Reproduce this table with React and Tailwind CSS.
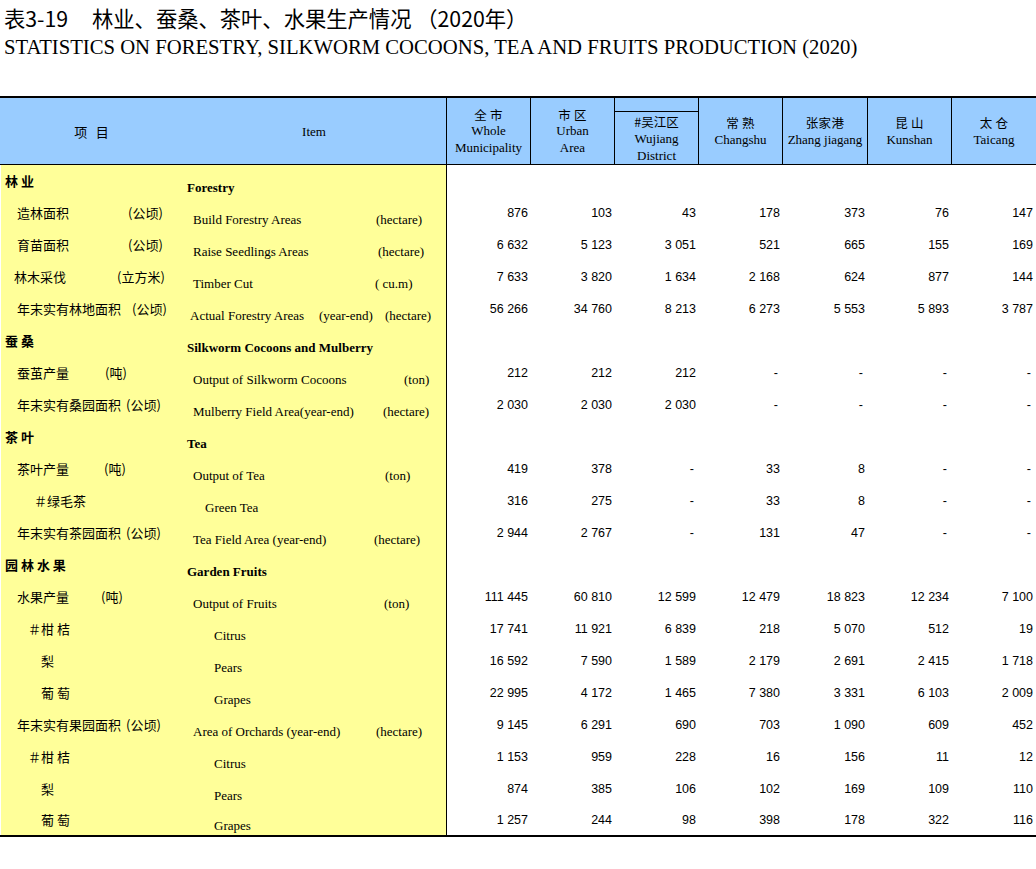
import React from "react";

const zh = { fontFamily: '"Noto Sans CJK SC", "Liberation Sans", sans-serif' };

const cols = [
  { zh: "全 市", en: ["Whole", "Municipality"] },
  { zh: "市 区", en: ["Urban", "Area"] },
  { zh: "#吴江区", en: ["Wujiang", "District"], sub: true },
  { zh: "常 熟", en: ["Changshu"] },
  { zh: "张家港", en: ["Zhang jiagang"] },
  { zh: "昆 山", en: ["Kunshan"] },
  { zh: "太 仓", en: ["Taicang"] },
];

const colW = ["w-[84px]", "w-[84px]", "w-[84px]", "w-[84px]", "w-[85px]", "w-[84px]", "w-[84px]"];

// zx/ex = left offsets, zw/ew = label widths (unit follows)
const rows = [
  { sec: true, z: "林 业", e: "Forestry" },
  { z: "造林面积", zx: "pl-[16px]", zw: "w-[111px]", zu: "(公顷)", e: "Build Forestry Areas", ex: "pl-[11px]", ew: "w-[183px]", eu: "(hectare)", n: ["876", "103", "43", "178", "373", "76", "147"] },
  { z: "育苗面积", zx: "pl-[16px]", zw: "w-[111px]", zu: "(公顷)", e: "Raise Seedlings Areas", ex: "pl-[11px]", ew: "w-[185px]", eu: "(hectare)", n: ["6 632", "5 123", "3 051", "521", "665", "155", "169"] },
  { z: "林木采伐", zx: "pl-[13px]", zw: "w-[103px]", zu: "(立方米)", e: "Timber Cut", ex: "pl-[11px]", ew: "w-[182px]", eu: "( cu.m)", n: ["7 633", "3 820", "1 634", "2 168", "624", "877", "144"] },
  { z: "年末实有林地面积", zx: "pl-[16px]", zw: "w-[115px]", zu: "(公顷)", e: "Actual Forestry Areas", ex: "pl-[8px]", ew: "w-[129px]", em: "(year-end)", eu: "(hectare)", n: ["56 266", "34 760", "8 213", "6 273", "5 553", "5 893", "3 787"] },
  { sec: true, z: "蚕 桑", e: "Silkworm Cocoons and Mulberry" },
  { z: "蚕茧产量", zx: "pl-[16px]", zw: "w-[88px]", zu: "(吨)", e: "Output of Silkworm Cocoons", ex: "pl-[11px]", ew: "w-[211px]", eu: "(ton)", n: ["212", "212", "212", "-", "-", "-", "-"] },
  { z: "年末实有桑园面积", zx: "pl-[16px]", zw: "w-[109px]", zu: "(公顷)", e: "Mulberry Field Area(year-end)", ex: "pl-[11px]", ew: "w-[190px]", eu: "(hectare)", n: ["2 030", "2 030", "2 030", "-", "-", "-", "-"] },
  { sec: true, z: "茶 叶", e: "Tea" },
  { z: "茶叶产量", zx: "pl-[16px]", zw: "w-[87px]", zu: "(吨)", e: "Output of Tea", ex: "pl-[11px]", ew: "w-[192px]", eu: "(ton)", n: ["419", "378", "-", "33", "8", "-", "-"] },
  { z: "＃绿毛茶", zx: "pl-[33px]", e: "Green Tea", ex: "pl-[23px]", n: ["316", "275", "-", "33", "8", "-", "-"] },
  { z: "年末实有茶园面积", zx: "pl-[16px]", zw: "w-[109px]", zu: "(公顷)", e: "Tea Field Area (year-end)", ex: "pl-[11px]", ew: "w-[181px]", eu: "(hectare)", n: ["2 944", "2 767", "-", "131", "47", "-", "-"] },
  { sec: true, z: "园 林 水 果", e: "Garden Fruits" },
  { z: "水果产量", zx: "pl-[16px]", zw: "w-[84px]", zu: "(吨)", e: "Output of Fruits", ex: "pl-[11px]", ew: "w-[191px]", eu: "(ton)", n: ["111 445", "60 810", "12 599", "12 479", "18 823", "12 234", "7 100"] },
  { z: "＃柑 桔", zx: "pl-[27px]", e: "Citrus", ex: "pl-[32px]", n: ["17 741", "11 921", "6 839", "218", "5 070", "512", "19"] },
  { z: "梨", zx: "pl-[40px]", e: "Pears", ex: "pl-[32px]", n: ["16 592", "7 590", "1 589", "2 179", "2 691", "2 415", "1 718"] },
  { z: "葡 萄", zx: "pl-[40px]", e: "Grapes", ex: "pl-[32px]", n: ["22 995", "4 172", "1 465", "7 380", "3 331", "6 103", "2 009"] },
  { z: "年末实有果园面积", zx: "pl-[16px]", zw: "w-[109px]", zu: "(公顷)", e: "Area of Orchards (year-end)", ex: "pl-[11px]", ew: "w-[183px]", eu: "(hectare)", n: ["9 145", "6 291", "690", "703", "1 090", "609", "452"] },
  { z: "＃柑 桔", zx: "pl-[27px]", e: "Citrus", ex: "pl-[32px]", n: ["1 153", "959", "228", "16", "156", "11", "12"] },
  { z: "梨", zx: "pl-[40px]", e: "Pears", ex: "pl-[32px]", n: ["874", "385", "106", "102", "169", "109", "110"] },
  { z: "葡 萄", zx: "pl-[40px]", e: "Grapes", ex: "pl-[32px]", n: ["1 257", "244", "98", "398", "178", "322", "116"] },
];

function HeaderCell({ col, w }) {
  if (col.sub) {
    return (
      <div className={`${w} flex flex-col border-r border-black`}>
        <div className="h-[15px] border-b border-black" />
        <div className="flex-1 flex flex-col items-center justify-center leading-[17px] pt-[1px]">
          <div style={zh} className="text-[12.5px]">{col.zh}</div>
          {col.en.map((t) => (
            <div key={t} className="text-[13px]">{t}</div>
          ))}
        </div>
      </div>
    );
  }
  return (
    <div className={`${w} flex flex-col items-center justify-center border-r border-black leading-[16.5px] pt-[1px] last:border-r-0`}>
      <div style={zh} className="text-[12.5px] tracking-wide">{col.zh}</div>
      {col.en.map((t) => (
        <div key={t} className="text-[13px] whitespace-nowrap">{t}</div>
      ))}
    </div>
  );
}

export default function App() {
  return (
    <div className="w-[1036px] h-[869px] bg-white text-black font-['Liberation_Serif',serif]">
      {/* Title */}
      <div className="pt-[4px] pl-[4px]">
        <h1 style={zh} className="text-[21.3px] font-normal leading-[28px] whitespace-pre">
          表3-19     林业、蚕桑、茶叶、水果生产情况 （2020年）
        </h1>
        <h2 className="text-[20.7px] leading-[28px] mt-[1px]">
          STATISTICS ON FORESTRY, SILKWORM COCOONS, TEA AND FRUITS PRODUCTION (2020)
        </h2>
      </div>

      {/* Table */}
      <div className="mt-[35px] border-t-2 border-b-2 border-black">
        {/* Header */}
        <div className="flex h-[67px] bg-[#99ccff] border-b border-black">
          <div className="w-[447px] flex border-r border-black pl-[1px]">
            <div style={zh} className="w-[181px] flex items-center justify-center text-[13px] whitespace-pre pt-[2px]">
              项   目
            </div>
            <div className="flex-1 flex items-center justify-center text-[13px] pt-[2px]">Item</div>
          </div>
          {cols.map((c, i) => (
            <HeaderCell key={c.zh} col={c} w={colW[i]} />
          ))}
        </div>

        {/* Body */}
        <div className="flex">
          <div className="w-[447px] bg-[#ffff99] border-r border-black ml-[1px]">
            {rows.map((r, i) => (
              <div key={i} className="h-[32px] flex last:h-[30px]">
                <div style={zh} className={`w-[181px] flex items-center text-[13px] whitespace-nowrap ${r.sec ? "font-bold pl-[4px]" : r.zx}`}>
                  {r.zu ? (
                    <>
                      <span className={r.zw}>{r.z}</span>
                      <span>{r.zu}</span>
                    </>
                  ) : (
                    <span className="whitespace-pre">{r.z}</span>
                  )}
                </div>
                <div className={`flex-1 flex items-end pb-[1px] leading-[16px] text-[13px] whitespace-nowrap ${r.sec ? "font-bold pl-[5px]" : r.ex}`}>
                  {r.eu ? (
                    <>
                      <span className={r.ew}>{r.e}</span>
                      {r.em && <span className="w-[66px]">{r.em}</span>}
                      <span>{r.eu}</span>
                    </>
                  ) : (
                    <span>{r.e}</span>
                  )}
                </div>
              </div>
            ))}
          </div>
          <div className="flex-1 font-['Liberation_Sans',sans-serif] text-[12.5px]">
            {rows.map((r, i) => (
              <div key={i} className="h-[32px] flex last:h-[30px]">
                {r.n &&
                  r.n.map((v, j) => (
                    <div key={j} className={`${colW[j]} flex items-center justify-end ${v === "-" ? "pr-[5px]" : "pr-[3px]"} ${j === 0 ? "w-[83px]" : ""}`}>
                      {v}
                    </div>
                  ))}
              </div>
            ))}
          </div>
        </div>
      </div>
    </div>
  );
}
